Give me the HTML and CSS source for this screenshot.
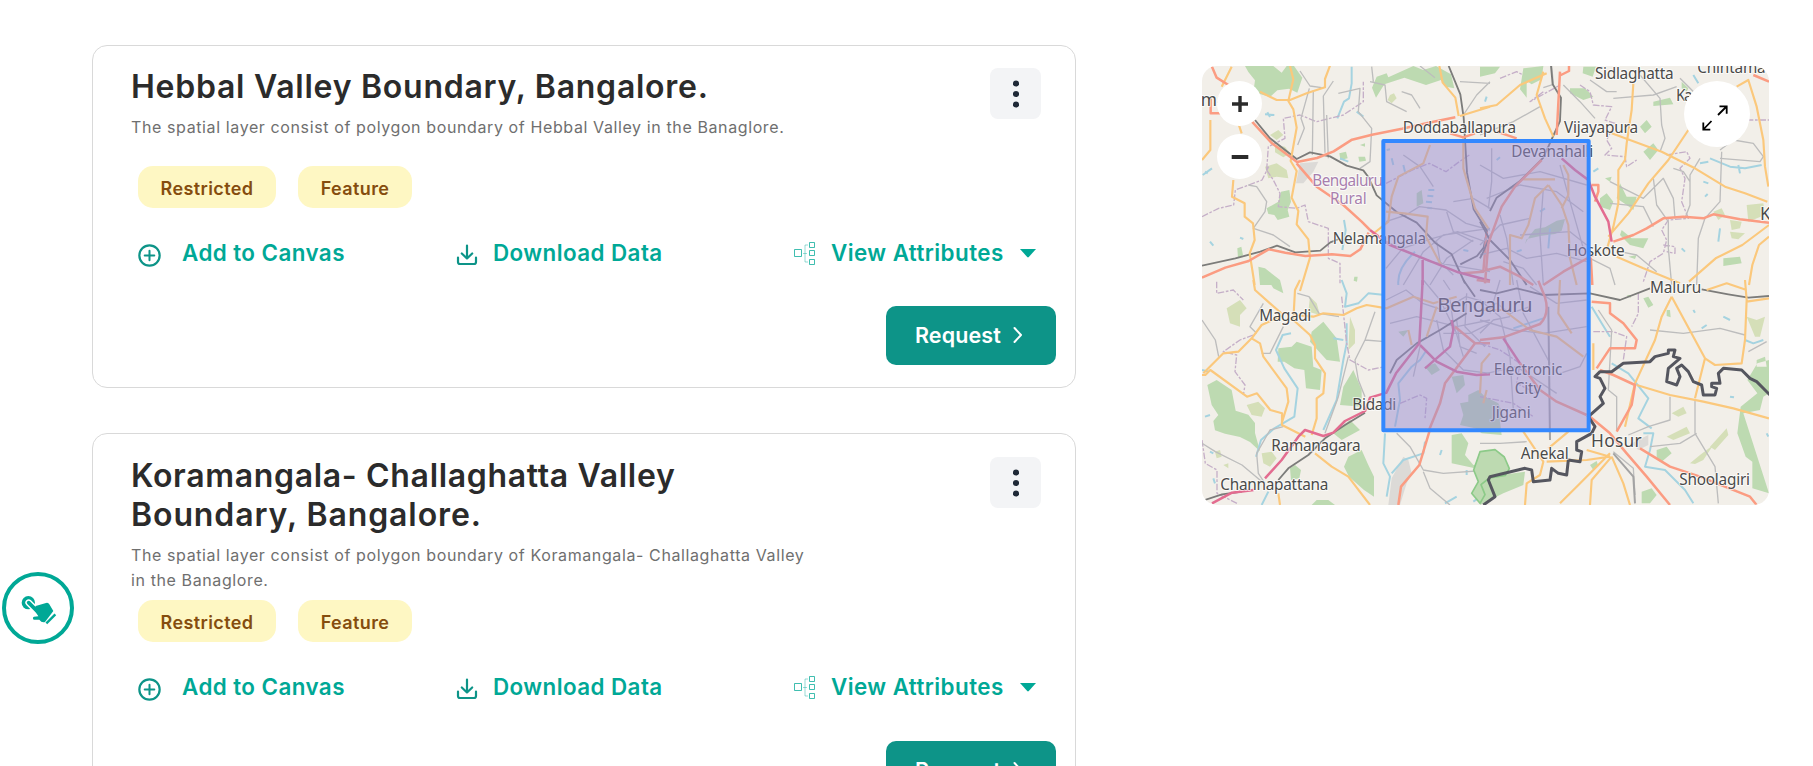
FILE: index.html
```html
<!DOCTYPE html>
<html lang="en">
<head>
<meta charset="utf-8">
<title>Spatial layers</title>
<link rel="stylesheet" href="styles.css">
</head>
<body>
<svg class="defs" width="0" height="0">
  <symbol id="i-add" viewBox="0 0 24 24"><g fill="none" stroke="currentColor" stroke-width="2.300"><circle cx="12" cy="12" r="10.600"/><path d="M12 7v10M7 12h10" stroke-linecap="round" stroke-width="2.100"/></g></symbol>
  <symbol id="i-down" viewBox="0 0 22 22"><path d="M2 13.500V18a2 2 0 0 0 2 2h14a2 2 0 0 0 2-2v-4.500M11 1.500v13M5.800 9.500l5.200 5 5.200-5" fill="none" stroke="currentColor" stroke-width="2.200" stroke-linecap="round" stroke-linejoin="round"/></symbol>
  <symbol id="i-tree" viewBox="0 0 22 24"><g fill="none" stroke="currentColor"><path d="M.5 8.500h7v7h-7zM15.500 1.500h5v5h-5zM15.500 9.500h5v5h-5zM15.500 18.500h5v5h-5z" opacity=".75"/><path d="M14 4h-3v17h3M9 12.500h4" opacity=".4"/></g></symbol>
  <symbol id="i-caret" viewBox="0 0 16 9"><path d="M0 0h16L8.800 8q-.8.800-1.600 0z" fill="currentColor"/></symbol>
  <symbol id="i-dots" viewBox="0 0 6 28"><g fill="currentColor"><circle cx="3" cy="3.500" r="3.100"/><circle cx="3" cy="14" r="3.100"/><circle cx="3" cy="24.500" r="3.100"/></g></symbol>
  <symbol id="i-next" viewBox="0 0 10 18"><path d="M1.500 2l6.500 7-6.500 7" fill="none" stroke="currentColor" stroke-width="2" stroke-linecap="round" stroke-linejoin="round"/></symbol>
</svg>
<div class="page">
  <aside class="side">
    <button class="touch" aria-label="Interact">
      <svg viewBox="6 36 216 216" width="72" height="72">
        <circle cx="114" cy="144" r="102" fill="#fff" stroke="#00a896" stroke-width="12"/>
        <circle cx="85" cy="128" r="20" fill="#00a896"/>
        <path d="M86 128l30 30" stroke="#fff" stroke-width="20" stroke-linecap="round"/>
        <path d="M86 128l32 32" stroke="#00a896" stroke-width="11" stroke-linecap="round"/>
        <path d="M107 138l31-9q7-2 10 4l12 20-25 33q-10 3-17-7l-17 0q-5-6 1-9l13-1-12-20z" fill="#00a896"/>
        <path d="M139 190l27-27" stroke="#00a896" stroke-width="7"/>
      </svg>
    </button>
  </aside>
  <main class="cards">
    <article class="card">
      <header class="card-head">
        <div class="card-text">
          <h2 class="title">Hebbal Valley Boundary, Bangalore.</h2>
          <p class="desc">The spatial layer consist of polygon boundary of Hebbal Valley in the Banaglore.</p>
        </div>
        <button class="more" aria-label="More"><svg width="6" height="28"><use href="#i-dots"/></svg></button>
      </header>
      <div class="badges"><span class="badge b1">Restricted</span><span class="badge b2">Feature</span></div>
      <div class="actions">
        <a class="action add"><svg width="23" height="23"><use href="#i-add"/></svg><span>Add to Canvas</span></a>
        <a class="action down"><svg width="22" height="22"><use href="#i-down"/></svg><span>Download Data</span></a>
        <a class="action view"><svg width="22" height="24"><use href="#i-tree"/></svg><span>View Attributes</span><svg class="caret" width="16" height="9"><use href="#i-caret"/></svg></a>
      </div>
      <button class="request"><span>Request</span><svg width="10" height="18"><use href="#i-next"/></svg></button>
    </article>
    <article class="card">
      <header class="card-head">
        <div class="card-text">
          <h2 class="title">Koramangala- Challaghatta Valley<br><span class="wide">Boundary, Bangalore.</span></h2>
          <p class="desc">The spatial layer consist of polygon boundary of Koramangala- Challaghatta Valley<br>in the Banaglore.</p>
        </div>
        <button class="more" aria-label="More"><svg width="6" height="28"><use href="#i-dots"/></svg></button>
      </header>
      <div class="badges"><span class="badge b1">Restricted</span><span class="badge b2">Feature</span></div>
      <div class="actions">
        <a class="action add"><svg width="23" height="23"><use href="#i-add"/></svg><span>Add to Canvas</span></a>
        <a class="action down"><svg width="22" height="22"><use href="#i-down"/></svg><span>Download Data</span></a>
        <a class="action view"><svg width="22" height="24"><use href="#i-tree"/></svg><span>View Attributes</span><svg class="caret" width="16" height="9"><use href="#i-caret"/></svg></a>
      </div>
      <button class="request"><span>Request</span><svg width="10" height="18"><use href="#i-next"/></svg></button>
    </article>
  </main>
  <section class="map">
    <svg class="tiles" viewBox="0 0 1701 1317" width="567" height="439">
      <rect width="1701" height="1317" fill="#f2efe9"/>
      <!-- north-west -->
      <g transform="translate(-36 -33)">
        <path class="wood" d="M165 33h85l25 20 15-20h22l25 35-15 45-25-12-35 5-22 20-50-15 5-35-20-25zM560 65l30-10 5 12 75-34 30 12 38-12 45 25 10 42-25-5-15-20-45 15-65-22-60 20-25 40-12-30zM230 460l35-20 8-30 25-5 5 35-10 25 5 20-35 10-10-15-18-3zM205 635l20 5 45 35-10 15h-50zM142 580l12-5 5 25-15 10zM448 295l20-5 5 20-22 5zM505 305l20 0 3 12-20 3zM510 270l15-5 0 10zM493 665l10 0-2 15-10-3zM680 415l15-10 5 40-20 10z"/>
        <path class="scrub" d="M225 335l35-10 30 20 5 25-35-5-25 5zM240 240l25-15 15 15-20 15zM600 120l12-5 8 15-15 15-12-10zM255 270l30 5 15 20-20 12-25-15z"/>
        <path fill="#dcdad7" d="M330 325l55-5-15 30-30 35-22 0z"/>
        <path class="water" d="M485 35v50l-8 45-15 10-20 50M225 178l28 2M232 172l8 14M38 360l28-20M45 350l8 5M150 548l10 4M450 310l25 10M500 170l20 15M462 495l5 30-10 60M605 310l5 20M640 330l5 20M590 285l10-2M715 405l18 0M712 422l18 2M708 440l18 2M712 458l14 2M625 690q-5-50 50-100M890 125l-5 15M820 585l15 3M60 560l10 12"/>
        <path class="bound" d="M230 345l20 30 20 40-5 40 55 5 25-10 10 50 60 20v90l35 15v60M230 345l5-70 50-25-5-60 50-10 50 20 80-20 60-40v-60M36 485l50-25 45-10 5-45 80-30 20-40M588 385l80-40 50-20 50 25 40-30 30-20"/>
        <path class="minor" d="M330 48l30 45 35 5M358 100l-25 90 10 30-20 50M370 105l-3 195M430 78l-30 45 5 170M445 115l65-15-5 70 40 50-5 100-30 20M540 80l45 10 5 50 60 30M545 35l5 45M635 110l30 10 25 40M900 80l-40 40-40 60M175 390l25 5 30 45-5 30-35 50 60 20 50 35M410 180l5 130M690 33l45 35M810 80l90 5M588 640l50-60 90-30 75-20 97 35M640 690l60-100 60-50 140-20M720 690l50-80 80-55M588 500l60-20 40-25 80 10 60 40 72 20M590 560l60 30 70 30 180 30M640 300l50 35 40 60M770 470l20 60 60 30M790 440l60-10 50 30M740 560l10 60 40 40"/>
        <path class="railway" d="M195 195l45 55 80 62 40-20 60 12 50 28 50 14 15 20 25 55 60 50 60 32 55 60 50 35 40 87M776 33l35 85 10 70 10 165 20 110 40 65-10 50-20 25-50 25M36 632l100-22 75-20 50-18 55 20 75-5 30-25 25-10"/>
        <path class="second" d="M125 35l-30 60M300 33l10 40-15 65 15 25 10 55-18 100 18 30-15 80 20 40-5 40 35 45 5 55-30 100M145 205l10 30M210 110l50 25h40l50-20 55-18v-25l15-40M130 375l-4 50 38 20v40l25 20 5 50-15 40 15 95M36 315l25-30v-90M748 33l10 50 38 45 10 55M720 270l-20 55-75 40-20 60-10 75-50 40M900 155l-90 28M588 470l55 5 70 10-5 60 45 85M820 250l0 90 35 120 40 60"/>
        <path class="primary" d="M65 33l15 35 40 25M186 200l60 65 75 56 60-12 50-20 55-35 60-15 90-18 80-18 80-16M320 325l60 70 80 55 55 50 25 25M62 130v45h30M36 668l70-30 70-20 60-35 50 10 60 10 80-5 55 5 30-20 25-50M780 235l40 12 35-12M890 530l-10 120-60 5"/>
        <path class="trunk" d="M540 525l60 45 100 40 105 42 95 25M698 615v75"/>
      </g>
      <!-- north-east -->
      <g transform="translate(834 -33)">
        <path class="wood" d="M0 35l60 0-15 20-45 10zM130 40l60-7-5 40-30 15-15-10 0 50-20-25zM310 35h38l-10 30-30-10zM270 100l45 0 25 25-30 10-40-20zM520 140l50-12 10 20-60 5zM360 430l20-15 20 25-10 25-30-10zM420 385l20 40 30 0-10 40-20-15-30-20zM425 525l30 25h50l-15 30-40-10-30-30zM480 215l20-20 15 20-20 20zM490 290l30-25 15 20-25 30zM730 610l50-5 5 20-55 8zM150 540l15-18 30-5 35-20 25-5-10 35-20 10-40 5-45 10-5 15zM605 80l20 20-5 10-15-10zM375 370l20-5-5 15zM445 605l25-5-5 12z"/>
        <path class="scrub" d="M800 450l50-5 5 35-50 20zM700 470l25-10 10 20-20 15zM750 495l35 5-5 20-25 5zM750 530l45 5-20 18-20-3z"/>
        <path class="water" d="M690 310l60 25 45 5 50-10M775 330l5 25M640 60l15 25M660 325l25-5M720 520l-5 40M605 580l10 10M640 130l20-5M670 380l15 5M675 425l8-8M340 350l15-10M210 520l-5 60M90 400l15-10M180 470l15-10M110 590l15-5M50 315l10-8M285 585l10 0"/>
        <path class="bound" d="M300 90l30 20 10 40 55 5-20 40 30 10-25 50 15 25-20 20 60 5 5 30 30-20M560 300l60-10 10 20-30 30 15 30-10 70 20 50-60 5-20 30 15 30-10 40-40 25-20 60M550 570l35 5v20l-25-5M60 70l50-20 20 10M800 195l67 0M190 110l-40 30 90-50"/>
        <path class="minor" d="M250 90l50 50 45 50M330 75l50 35 30 0M400 130l120-10 70-25M480 60l60 70 5 80 10 40-15 40M0 240l100-40 80-45M600 70l60 60M660 310l-30 50 0 90-15 40M725 290l-5 150-45 50-20 60-5 140M720 285l40-30 60 10 30 40-10 15-120-10M580 340l30 10 20 30M520 370l10 80 35 50v80l10 110M390 445l100 10 30 60M390 380l100 50 30-30 30-30 30 60 5 60M420 590l50 10 60 50M330 610l60 30 15 50M215 33l5 55-30 10M35 280v100l-10 80M0 330l70 40 110-20 140 40M20 430l100-40 110 20 80 60M120 540l150-10 50 40M60 480l20 70 20 140M190 400l-10 140 10 150M240 330l30 110 40 140M0 600l80-20 60 30 90-15 90 25M70 620l60 20 40 50M0 570l60-60 90-20"/>
        <path class="railway" d="M213 33l5 55 25 40-3 70-50 110-70 70-70 50-20 40M0 500l30 55 60 60 50 75M25 555l-15 35-10 20"/>
        <path class="second" d="M0 160l50-10 70-60 80-35M190 50l-20 70 25 70 25 55M460 85l-5 80-15 100-5 50-20 30 0 100-15 70-20 70M395 235l150 55 100 50 90 55 60 20 67 25M625 225l-60 90-60 70-60 90-60 70M770 95l35-20 25 80 20 100 5 80 10 60M410 605l80 35 110 45M867 510l-80 60-80 40-80 70M867 545l-30 25-20 60-10 60M130 373h95M205 390l-40 40-20 80-20 40-35-10v150M205 390l40 60 20 60 5 100 20 80M250 330l15 30 0 60-20 40"/>
        <path class="primary" d="M240 50l-10 190M267 33v15l-30 15M50 230l60 20M400 560l60-20 40-20 50-30 60-5 60 5 30-12 80 15 87 10M335 390h20v20l-10 30M820 60l47 20M190 690l60-40 90-50M0 650l60-15 60 30 40 25M185 315l-80 80-40 60-40 110-10 120M332 600l5 90"/>
        <path class="trunk" d="M245 310l40 35 40 30 20 50 40 75 10 60"/>
      </g>
      <!-- south-west -->
      <g transform="translate(-36 642)">
        <path class="wood" d="M235 0h35l10 40-30-15zM52 315l28-15 45 30 12 62 38 12 20 25 0 30 15 55-30-28-30-15-45-10-30-10-5-28 15-18-20-30zM265 205l40-5 15-15 45 15 5 60 25 10-5 60-42-5-5-55-30-5-30-20-20 0zM365 155l35-30 40 50 10 70-40-5-50-55zM460 320l30-50 25 60 0 50-65-5zM430 460l50-40 30 30-55 30zM475 530l40-20 20 45 17 35 0 60-30-20-45-40-15-30zM300 565l15-10 18 15-5 25-25 5zM415 660l20 15h-70l15-15zM785 465l30-5 20 30-10 35 25 30 30-5 0 40 20 10v55l-25 5-10-30 15-40-25-25-70-15z"/>
        <path class="wood" d="M810 370l25-5 0-20 30-15 20 20 40 20 15 35-10 20 5 40-60-5-20-15-45-10 10-30z"/>
        <path class="scrub" d="M110 85l40-25 20 25-20 20 0 35-30-10zM170 375l35-10 20 20-10 25-30-5zM480 110l15 40 0 40-20 20zM215 520l30-5 15 20-20 25-20-10zM360 50l20 20 10 35-35-10zM75 515l15-5 5 20-15 5zM100 555l15-5 0 15z"/>
        <path class="wood" d="M705 260l30-10 15 20-25 15zM785 290l35-5 5 30-25 25zM625 155l30-5-15 20z"/>
        <path fill="#dcdad7" d="M640 530l15 10 10 40-15 30-20 65h-35l10-80z"/>
        <path class="water" d="M303 160l-25 5-20 45 25 55 40 60-10 85-60 35-40 35-15 50M455 0l15 40-5 40 40-10 30-30 50 5M400 450l40-90 20-120 10-50 0-60M430 175l30 5M585 460l-5 90 20 40-10 60M705 485l-5 35-60 20-35 40M800 650l-35 20M900 630l-50 35M215 675l20-40M36 270l20 5M45 410l15-5M60 515l10 5M70 595l5 15M615 440l15-80-5-50 40-50 25-20 20-30M755 510l-5 15M830 570l0 15"/>
        <path class="bound" d="M80 5v35l50-10 30 30M190 165l-40 15-50 35 40 10-5 50 30 40-5 30M36 480l10 70 35 20v70l60 30M455 50l15 140 10 50 55 30 50-10M630 370l60-25 20 10-5 60"/>
        <path class="minor" d="M322 40l35 10 30 50 60 10M220 70l-40 70 20 20M36 120l40 60 10 50M280 140l-40 80-25 0M525 180l60 5M555 95l-30 85-30 60 10 60 20 50M36 490l40 25 80 40 60 50M280 440l-40 10-40 70 5 60 20 30M405 460l40-110 30-120M620 460l40 40 40 70 60 10 140-10M700 575l20 50 60 50M588 60l60-30 50 40 60 20 70-40 70 20M600 130l80-20 120 30 100-20M700 0l50 60 50 100M740 120l20 90 60 60 80 10M780 60l10 70 30 100M830 40l-5 100 60 60M690 200l-20 90M760 0l20 30M800 120l10 80 50 20M760 160l80 0 60-30"/>
        <path class="railway" d="M36 663l60-20 60-8M265 600l30-35 60-40 50-50 60-40 60-37M600 280l20-40 60-50 70-40 80-50M820 0l35 50"/>
        <path class="second" d="M190 0l5 30 45 40 40 35M330 0l-15 30-5 90 50 45 15 30v40l30 45-5 60-20 15 0 60-15 50M310 105l60 5 30-10 60 5 40-20 30-10 60 10 80-35 60 20 70-20M280 105l-65 30-30 40-40 40-45 5-60 60M36 285h10l15-15 110 80 30-10 40 50 35 10 0 35 40 20 30 15M185 175l25 15 10 40 70 95 5 40-20 65M375 520l50 40 50 30 65 85M265 640l5 35M655 150l10 45M740 80l-30 90M870 340l5-90 25-30"/>
        <path class="primary" d="M718 455l-30 100-55 65-8 55M900 190l-45 0-60-50M855 190l-60 80-30 40-15 60-35 85M860 0l40 5"/>
        <path class="trunk" d="M225 595l50-55 50-70 20-20 55 18 30-10 35-35 60-30 15-40 50-15M66 670l60-32 65-8M588 340l30-60 70-90 10-190M690 195l50 50 60 30 60 10 40-2M705 265l75-65 10-50-5-30"/>
      </g>
      <!-- south-east -->
      <g transform="translate(834 642)">
        <path class="wood" d="M25 590l110-15-5 40-60 25-70 35zM790 400l50-10 10-40 17-10v-100l-35 10-30 50 30 40-50 40-10 80 25 70 20 15 0 80 50 15zM330 555l20-12 5 15-15 12zM530 510l30-10 15 20-30 25-15-10zM485 635l30-10 15 20-20 25h-25zM490 55l15-5 15 25-15 8zM560 90l10 0 2 22-12-4zM830 240l25-10 5 30-30 0zM0 560l10 0-10 30zM440 45l12 0 0 10z"/>
        <path class="reserve" d="M0 515l45-6 28 22 15 35-12 20-48 8-25 20 12 30-15 26-25-30 20-35-14-35z"/>
        <path class="scrub" d="M575 400l35-20 10 20-25 10zM630 550l30-25 40-30-30 45-25 12zM800 110l30 10 25-10-15 60-15 0zM690 500l50-55 5 20-40 45zM560 470l60-30 10 20-50 20z"/>
        <path fill="#dcdad7" d="M455 490l50-25v30l-30 15z"/>
        <path class="water" d="M335 80l30 50 25 40M395 250l50 30 60 75-20 40-10 20 40 30M490 460l30 0-10 50-15 50 60 10 60 60 25 40M100 145l60-20 30-10M795 180l25 10 30-10M730 110l20 10M640 90l5 8M665 145l15-10M750 350l12 2M860 460l5 10"/>
        <path class="bound" d="M475 40v60l-20 40M340 155h60l40 15-10 70M0 190l60 20 60 40-10 60 60 30M0 350l100 20 60 40"/>
        <path class="minor" d="M510 150l100 10 110-15 75 20M570 350v70l-65 20-60 25M645 360v100l60 100 10 110M650 460l-50 30-90 10M0 490l60 0 80-5M400 515l60 50 5 80M355 90l40 60-10 180 25 20v100M860 185l-55 30M0 120l100 30 90 10 130-20M0 60l60 50 30 120 10 160M60 0l-30 100M110 0l20 100 80 150M150 20l80 50 90-10M20 280l90-20 120 80M0 90l50-20 40 30 60-20M0 160l40-40 50-10M240 280l60-20 20-40"/>
        <path class="railway" d="M0 30l50 10 60-15 80 20 140-5 90 20 90-35M665 28l80 15 60 10 62-5"/>
        <path class="minor rail-minor" d="M205 80l5 400M400 520l60 70 5 80"/>
        <path class="second" d="M575 50l-30 60-20 70-60 130-30 130M575 50l100 185-30 120M675 235l30 20 80-5 10-70 5-120-5-60M800 65l67-10M680 30l60-20 60 20M470 315l100 30 100 20 90 20 107 30M390 520l-100 100-50 50M395 530l-60 70-5 75M395 530l35 80 20 65M200 545l120-5 70-10M265 455l-60 50M320 510l70 20M130 455l60 90-10 40-40 25-5 65M340 270v-80M0 90l70 0 80 60 80 20 80 60M240 0l-5 100 40 60M20 330l-10 40"/>
        <path class="primary" d="M335 65l55 5 0 30 40 30 40 50-5 25-75 0-40 60M360 270l40 15 65 30-10 60-45 80M330 410l60 50 50 60 60 70 70 85M480 505l90 55 90 30 50 20 100 40 20 25M0 180l70-8 110-40q30-30 15-80l-20-50"/>
        <path class="trunk" d="M70 175l50 75"/>
        <path class="primary" d="M120 250l60 80 50 35 90 40"/>
        <path class="state" d="M10 675l35-25-20-50 5-10 105-25 20 5 5 35 50-5 5-35 20 15 25 5 5-45 35 5 5-30-15-5 0-25 45-25 10-20-20-30 45-40-10-20 15-25-15-30-15-5 15-15 35 0 35-25 80-5 15-15 40-10 0-10 20 0-5 20 20 5-35 30-5 40 30 10 10-25-10-25 15-10 20 20 15 30 25 10 5 30 35 0 5-20-15-5 0-10 25 0-5-30 15-15 55 5 25 25 20 10 40 40"/>
      </g>
      <g class="labels">
        <text x="-4" y="120" class="town">ma</text>
        <text x="602" y="200" textLength="340">Doddaballapura</text>
        <text x="1086" y="200" textLength="222">Vijayapura</text>
        <text x="1179" y="39" textLength="236">Sidlaghatta</text>
        <text x="1486" y="22" textLength="205">Chintama</text>
        <text x="1422" y="106" textLength="50">Ka</text>
        <text x="928" y="273" textLength="246">Devanahalli</text>
        <text class="district" x="331" y="360" textLength="212">Bengaluru</text>
        <text class="district" x="384" y="413" textLength="110">Rural</text>
        <text x="392" y="533" textLength="280">Nelamangala</text>
        <text x="1094" y="569" textLength="174">Hoskote</text>
        <text x="1344" y="681" textLength="154">Maluru</text>
        <text class="town" x="1674" y="461">Ko</text>
        <text x="172" y="766" textLength="156">Magadi</text>
        <text class="city" x="706" y="738" textLength="286">Bengaluru</text>
        <text x="875" y="926" textLength="206">Electronic</text>
        <text x="938" y="983" textLength="80">City</text>
        <text x="869" y="1056" textLength="117">Jigani</text>
        <text x="451" y="1032" textLength="132">Bidadi</text>
        <text x="208" y="1155" textLength="268">Ramanagara</text>
        <text x="55" y="1273" textLength="324">Channapattana</text>
        <text x="956" y="1180" textLength="144">Anekal</text>
        <text class="town" x="1167" y="1142" textLength="152">Hosur</text>
        <text x="1432" y="1256" textLength="212">Shoolagiri</text>
      </g>
      <rect x="544" y="225" width="616" height="868" fill="#988bd1" fill-opacity=".5" stroke="#3388ff" stroke-width="12" stroke-linejoin="round"/>
    </svg>
    <div class="zoom">
      <button class="zbtn" aria-label="Zoom in"><svg width="18" height="18" viewBox="0 0 18 18"><path d="M9 1v16M1 9h16" stroke="#2b2b2b" stroke-width="3.400"/></svg></button>
      <button class="zbtn" aria-label="Zoom out"><svg width="18" height="18" viewBox="0 0 18 18"><path d="M.7 9h16.600" stroke="#2b2b2b" stroke-width="3.800"/></svg></button>
    </div>
    <button class="expand" aria-label="Expand"><svg width="26" height="26" viewBox="0 0 26 26"><path d="M16 10l8.500-8.500M17.500 1.300h7.200v7.400M9.500 16L1.300 24.500M1.300 17.500v7.200h7" fill="none" stroke="#000" stroke-width="1.800"/></svg></button>
  </section>
</div>
</body>
</html>
```
FILE: styles.css
```css
* { box-sizing: border-box; }
body { margin: 0; background: #fff; font-family: Inter, "Liberation Sans", sans-serif; height: 766px; overflow: hidden; }
button { border: 0; padding: 0; font: inherit; background: none; }
.defs { position: absolute; }
svg { display: block; flex: none; }
.page { display: flex; align-items: flex-start; height: 766px; overflow: hidden; }
.side { width: 92px; padding: 572px 0 0 2px; flex: none; }
.touch { display: block; }
.cards { display: flex; flex-direction: column; gap: 45px; width: 984px; padding-top: 45px; flex: none; }
.card { display: flex; flex-direction: column; border: 1px solid #d9d9d9; border-radius: 15px; padding: 21px 19px 22px 38px; }
.card + .card { padding-top: 22px; }
.card-head { display: flex; justify-content: space-between; align-items: flex-start; min-height: 92px; margin-bottom: 7px; }
.title { margin: 0 0 9px; font-size: 32px; line-height: 39px; font-weight: 600; color: #2b2b2b; letter-spacing: .74px; white-space: nowrap; }
.card + .card .title { letter-spacing: .67px; }
.card + .card .wide { letter-spacing: .9px; }
.desc { margin: 0; font-size: 16px; line-height: 25px; letter-spacing: .61px; color: #6f6f6f; white-space: nowrap; }
.more { width: 51px; height: 51px; margin: 1px 15px 0 0; border-radius: 8px; background: #f3f4f6; color: #1f2937; display: flex; align-items: center; justify-content: center; flex: none; }
.badges { display: flex; gap: 22px; padding-left: 7px; }
.badge { height: 42px; border-radius: 15px; background: #fef7c3; color: #854d0e; font-size: 18px; line-height: 45px; font-weight: 600; letter-spacing: .4px; text-align: center; }
.b1 { width: 138px; }
.b2 { width: 114px; }
.actions { display: flex; align-items: center; height: 30px; margin: 30px 0 0 7px; }
.action { display: flex; align-items: center; color: #00a896; font-size: 22.400px; line-height: 30px; font-weight: 600; letter-spacing: .43px; white-space: nowrap; }
.add { width: 318px; gap: 21px; }
.down { width: 338px; gap: 15px; }
.view { gap: 15px; }
.add svg, .down svg { color: #0d9488; margin-top: 4px; }
.view .caret { margin-left: 1px; }
.request { display: flex; align-items: center; align-self: flex-end; gap: 12px; width: 170px; height: 59px; margin-top: 38px; padding: 0 0 1px 29px; border-radius: 10px; background: #0d9488; color: #fff; font-size: 21.500px; font-weight: 600; letter-spacing: .1px; }
.card + .card .request { margin-top: 39px; }
.map { position: relative; width: 567px; height: 439px; margin: 66px 0 0 126px; border-radius: 15px; overflow: hidden; flex: none; }
.zoom { position: absolute; left: 15px; top: 15px; display: flex; flex-direction: column; gap: 8px; }
.zbtn { width: 45px; height: 45px; border-radius: 50%; background: #fff; display: flex; align-items: center; justify-content: center; }
.expand { position: absolute; right: 19px; top: 15px; width: 66px; height: 66px; border-radius: 50%; background: #fff; display: flex; align-items: center; justify-content: center; padding: 8px 5px 0 0; }
.tiles path { stroke-linejoin: round; }
.wood { fill: #bddab1; }
.reserve { fill: #bddab1; stroke: #8cca88; stroke-width: 5; }
.scrub { fill: #d5dfb8; }
.water { fill: none; stroke: #a5d3e0; stroke-width: 6; }
.bound { fill: none; stroke: #c5afc8; stroke-width: 4; stroke-dasharray: 20 5 8 5; }
.minor { fill: none; stroke: #bdbdbd; stroke-width: 4; }
.rail-minor { stroke: #a3a3a3; stroke-width: 6; }
.railway { fill: none; stroke: #7c7c7a; stroke-width: 5.500; }
.second { fill: none; stroke: #fbc87c; stroke-width: 6.500; }
.primary { fill: none; stroke: #fb9c82; stroke-width: 7.500; }
.trunk { fill: none; stroke: #e36c90; stroke-width: 7.500; }
.state { fill: none; stroke: #55565f; stroke-width: 9; }
.labels { font-family: "Noto Sans", sans-serif; font-size: 46px; fill: #4a4a4a; stroke: #fff; stroke-opacity: .7; stroke-width: 6; stroke-linejoin: round; paint-order: stroke; }
.town { font-size: 52px; }
.city { font-size: 61px; }
.district { fill: #a87fae; }
```
